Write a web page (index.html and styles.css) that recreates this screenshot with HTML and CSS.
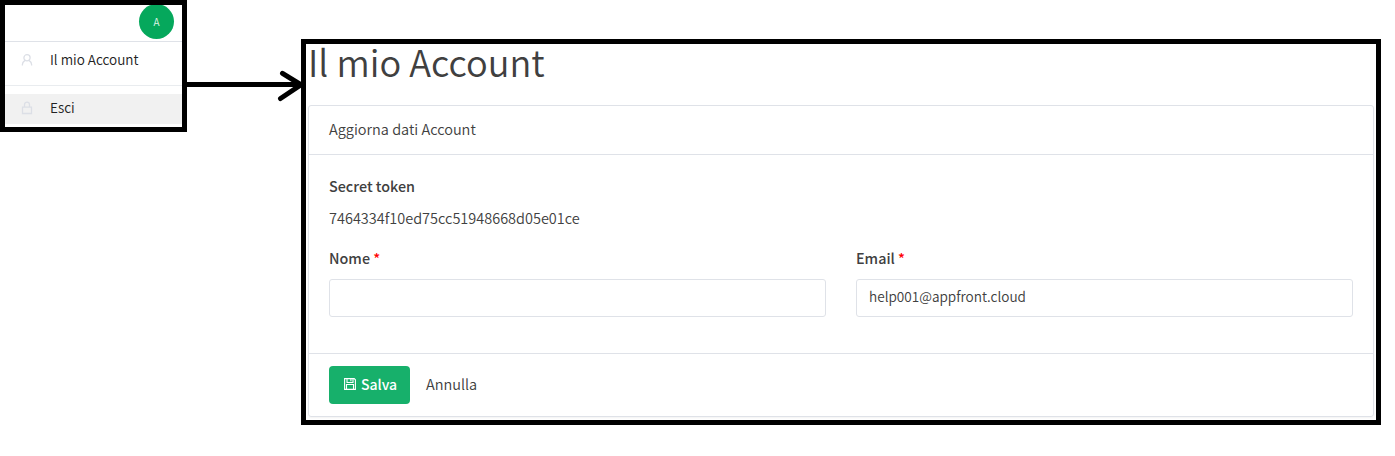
FILE: index.html
```html
<!DOCTYPE html>
<html lang="it">
<head>
<meta charset="utf-8">
<title>Il mio Account</title>
<link rel="stylesheet" href="styles.css">
</head>
<body>
<div class="flow">
  <aside class="menu">
    <div class="menu-top"><span class="avatar">A</span></div>
    <a class="menu-item account">
      <svg class="menu-icon" width="12" height="12" viewBox="0 0 12 12"><circle cx="6" cy="3.8" r="3.1"/><path d="M1.4 11.6V10.6C1.4 8.6 2.5 7.4 4 6.4M10.6 11.6V10.6C10.6 8.6 9.5 7.4 8 6.4"/></svg>
      <span class="menu-text">Il mio Account</span>
    </a>
    <a class="menu-item logout">
      <svg class="menu-icon" width="12" height="14" viewBox="0 0 12 14"><path d="M1.5 6.2H10.5V12.5H1.5ZM3.5 6.2V3.8C3.5 .2 8.5 .2 8.5 3.8V6.2"/></svg>
      <span class="menu-text">Esci</span>
    </a>
  </aside>
  <svg class="arrow" width="114" height="40" viewBox="0 0 114 40"><path class="shaft" d="M0 19.5H112"/><path class="head" d="M95.5 8.3L114 19.8L93.5 33.5"/></svg>
  <main class="page">
    <h1 class="title"><span class="title-text">Il mio Account</span></h1>
    <form class="card">
      <div class="card-header"><span class="header-text">Aggiorna dati Account</span></div>
      <div class="card-body">
        <div class="label"><span class="token-label">Secret token</span></div>
        <div class="token"><span class="token-text">7464334f10ed75cc51948668d05e01ce</span></div>
        <div class="fields">
          <div class="field">
            <label class="label">Nome <span class="required">*</span></label>
            <div class="input"></div>
          </div>
          <div class="field">
            <label class="label">Email <span class="required">*</span></label>
            <div class="input"><span class="input-text">help001@appfront.cloud</span></div>
          </div>
        </div>
      </div>
      <div class="card-footer">
        <button type="button" class="save">
          <svg class="save-icon" width="12" height="12" viewBox="0 0 12 12"><path d="M.6 .6H10.2L11.4 1.8V11.4H.6ZM3 .6V4.5H9V.6M2.5 11.4V6.5H9.5V11.4M6.9 1.2V3.2"/></svg>
          <span class="save-text">Salva</span>
        </button>
        <a class="cancel">Annulla</a>
      </div>
    </form>
  </main>
</div>
</body>
</html>
```
FILE: styles.css
```css
* { box-sizing: border-box; }
body { margin: 0; background: #fff; color: #404040; font: 350 14.5px/20px "Noto Sans CJK SC", "Noto Sans", sans-serif; }
.flow { display: flex; align-items: flex-start; width: 1395px; height: 456px; overflow: hidden; }
.menu { width: 187px; height: 132px; flex: none; border: 5px solid #000; overflow: hidden; color: #222; font-size: 13.5px; }
.menu-top { height: 37px; border-bottom: 1px solid #dfe2e8; display: flex; justify-content: flex-end; padding-right: 8px; }
.avatar { width: 35px; height: 35px; margin-top: -1px; border-radius: 50%; background: #05a85c; color: #e0f6eb; font-size: 10px; line-height: 35px; text-align: center; }
.menu-item { display: flex; align-items: center; padding-left: 16px; }
.menu-text { padding-bottom: 2px; }
.account { height: 44px; padding-bottom: 8px; border-bottom: 1px solid #e9ecef; }
.logout { height: 30px; margin-top: 8px; padding-bottom: 2px; background: #f1f1f1; }
.menu-icon { flex: none; margin-right: 17px; fill: none; stroke: #dcdfe6; stroke-width: 1.3; }
.arrow { flex: none; margin-top: 65px; fill: none; stroke: #000; stroke-width: 5; }
.head { stroke-linecap: round; stroke-linejoin: round; }
.page { width: 1080px; height: 386px; flex: none; margin-top: 39px; border: 5px solid #000; padding: 0 2px; }
.title { margin: 0; height: 61px; font-size: 36.15px; line-height: 34px; font-weight: 350; }
.card { width: 1066px; height: 312px; border: 1px solid #dfe2e8; border-radius: 3px; box-shadow: 0 1px 2px rgba(0, 0, 0, .05); }
.card-header { height: 49px; padding: 13px 20px; border-bottom: 1px solid #dfe2e8; }
.card-body { height: 198px; padding: 21px 20px 0; }
.label { display: block; height: 20px; font-size: 14.35px; font-weight: 500; }
.required { color: #f00; }
.token { margin: 12px 0 20px; height: 20px; }
.fields { display: grid; grid-template-columns: 1fr 1fr; gap: 30px; }
.input { height: 38px; margin-top: 11px; padding: 6px 12px; border: 1px solid #dfe2e8; border-radius: 3px; font-size: 13.6px; }
.card-footer { display: flex; align-items: center; height: 63px; border-top: 1px solid #dfe2e8; padding: 0 20px; }
.save { display: flex; align-items: center; width: 81px; height: 38px; padding: 0 0 2px 15px; border: 0; border-radius: 4px; background: #17b06b; color: #fff; font: inherit; font-size: 14px; font-weight: 500; }
.save-icon { fill: none; stroke: #fff; stroke-width: 1.1; margin-right: 5px; }
.cancel { margin-left: 16px; padding-bottom: 2px; }
```
